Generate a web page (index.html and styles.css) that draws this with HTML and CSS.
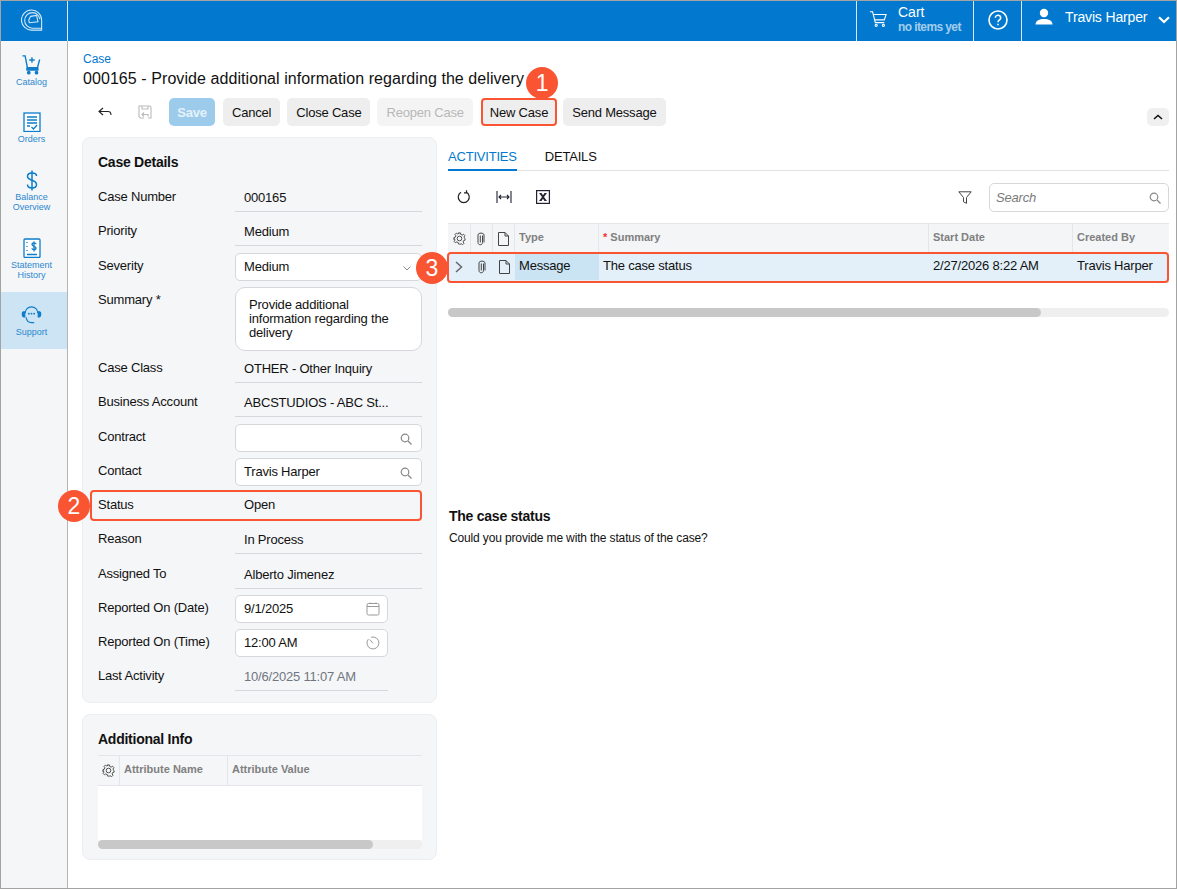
FILE: index.html
```html
<!DOCTYPE html>
<html lang="en">
<head>
  <meta charset="UTF-8" />
  <meta name="viewport" content="width=device-width, initial-scale=1" />
  <title>Case 000165</title>
  <link rel="stylesheet" href="styles.css">
</head>
<body>
  <div class="app">
    <header class="topbar">
      <div class="logo-cell">
        <svg width="22" height="22" viewBox="0 0 24 24" fill="none" stroke="#d5e9f7" stroke-width="1.2">
          <path d="M22.500 23H12A11 11 0 1 1 22.500 12Z"/>
          <path d="M22.500 21H12.500A8.500 8.500 0 1 1 12.500 4C17 4 20 7.500 20.500 11"/>
          <path d="M8.500 12 10.500 8 17 7 18.500 14 9 15Z"/>
        </svg>
      </div>
      <div class="topbar-space"></div>
      <div class="cart-cell">
        <svg width="18" height="18" viewBox="0 0 20 20" fill="none" stroke="#fff" stroke-width="1.2">
          <path d="M1 2h3l3 12h10M5 5h14l-2 6H6.500"/>
          <circle cx="8" cy="17" r="1.200"/><circle cx="16" cy="17" r="1.200"/>
        </svg>
        <div class="cart-text">
          <div class="cart-title">Cart</div>
          <div class="cart-sub">no items yet</div>
        </div>
      </div>
      <div class="help-cell">
        <svg width="20" height="20" viewBox="0 0 20 20" fill="none" stroke="#fff" stroke-width="1.600">
          <circle cx="10" cy="10" r="9"/>
          <path d="M7.300 7.800a2.700 2.500 0 1 1 4.300 2c-1 .8-1.600 1.200-1.600 2.400"/>
          <path d="M10 13.800v1.500"/>
        </svg>
      </div>
      <div class="user-cell">
        <svg class="user-ico" width="18" height="18" viewBox="0 0 18 18" fill="#fff">
          <circle cx="9" cy="5" r="4.200"/>
          <path d="M0.500 16.500c0-3.800 4-5.500 8.500-5.500s8.500 1.700 8.500 5.500Z"/>
        </svg>
        <span class="user-name">Travis Harper</span>
        <svg class="user-caret" width="12" height="8" viewBox="0 0 12 8" fill="none" stroke="#fff" stroke-width="2.200">
          <path d="M1 1.200 6 6l5-4.800"/>
        </svg>
      </div>
    </header>

    <div class="body-wrap">
      <nav class="sidenav">
        <a class="nav-item nav-catalog">
          <svg width="21" height="20" viewBox="0 0 22 22" fill="none" stroke="#0d7ccb" stroke-width="1.500">
            <path d="M1 1h3l2.500 13h11L20 5"/>
            <path d="M11.500 2.500v6M8.500 5.500h6"/>
            <path d="M6 14.500h12v2H6Z" fill="#0d7ccb"/>
            <circle cx="8" cy="19.500" r="1.300" fill="#0d7ccb"/><circle cx="16.500" cy="19.500" r="1.300" fill="#0d7ccb"/>
          </svg>
          <span>Catalog</span>
        </a>
        <a class="nav-item nav-orders">
          <svg width="18" height="20" viewBox="0 0 18 20" fill="#fff" stroke="#0d7ccb" stroke-width="1.300">
            <rect x="1" y="1" width="16" height="18.500"/>
            <path d="M4 5h10M4 8h10M4 11h10M4 14h3M8.500 15l2 2 3.500-4" fill="none"/>
          </svg>
          <span>Orders</span>
        </a>
        <a class="nav-item nav-balance">
          <svg width="12" height="21" viewBox="0 0 12 21" fill="none" stroke="#0d7ccb" stroke-width="1.500">
            <path d="M10.500 6C10.500 3.500 8.500 3 6 3S1.500 4 1.500 6.300c0 5 9 3 9 8.200C10.500 17 8.500 18 6 18s-4.500-1-4.500-3.500"/>
            <path d="M6 .5v20"/>
          </svg>
          <span>Balance<br>Overview</span>
        </a>
        <a class="nav-item nav-statement">
          <svg width="18" height="20" viewBox="0 0 18 20" fill="#fff" stroke="#0d7ccb" stroke-width="1.300">
            <rect x="1" y="1" width="16" height="18.500" rx="1"/>
            <path d="M4 4v1M4 8v1M4 12v1M4 16.500h10M13 6.300c0-1-1-1.500-2-1.500s-2 .5-2 1.800c0 2.200 4 1.200 4 3.400 0 1.200-1 1.700-2 1.700s-2-.5-2-1.500M11 3.500v10" fill="none"/>
          </svg>
          <span>Statement<br>History</span>
        </a>
        <a class="nav-item nav-support active">
          <svg width="21" height="18" viewBox="0 0 22 20" fill="none" stroke="#0d7ccb" stroke-width="1.300">
            <path d="M4 8C4 4 7 1 11 1s7 3 7 7"/>
            <path d="M3.500 6.500H2.200C1.200 6.500 .8 7.500 .8 9s.4 3 1.400 3h1.300Z" fill="#0d7ccb"/>
            <path d="M18.500 6.500h1.300c1 0 1.400 1 1.400 2.500s-.4 3-1.400 3h-1.300Z" fill="#0d7ccb"/>
            <path d="M5 12.500C5.500 16 8 18.500 11 18.500h3"/>
            <circle cx="8" cy="8.500" r="1" fill="#0d7ccb" stroke="none"/>
            <circle cx="11" cy="8.500" r="1" fill="#0d7ccb" stroke="none"/>
            <circle cx="14" cy="8.500" r="1" fill="#0d7ccb" stroke="none"/>
          </svg>
          <span>Support</span>
        </a>
      </nav>

      <main class="content">
        <a class="crumb">Case</a>
        <h1 class="page-title">000165 - Provide additional information regarding the delivery</h1>

        <div class="toolbar">
          <button class="icon-btn back-btn">
            <svg width="14" height="10" viewBox="0 0 14 10" fill="none" stroke="#222" stroke-width="1.100">
              <path d="M5 1 1 4.500 5 8M1 4.500h9c2 0 3 1 3 3.500"/>
            </svg>
          </button>
          <button class="icon-btn save-back-btn">
            <svg width="14" height="14" viewBox="0 0 14 14" fill="none" stroke="#bbb" stroke-width="1.100">
              <path d="M6 13H2.500L1 11.500V1h11l1 1.500V13h-3M4 1v3h6V1M6 7.500 4 9.500l2 2M4 9.500h6v2"/>
            </svg>
          </button>
          <button class="btn btn-save">Save</button>
          <button class="btn">Cancel</button>
          <button class="btn">Close Case</button>
          <button class="btn btn-off">Reopen Case</button>
          <button class="btn btn-new">New Case<span class="badge badge-1">1</span></button>
          <button class="btn">Send Message</button>
          <button class="collapse-btn">
            <svg width="10" height="6" viewBox="0 0 10 6" fill="none" stroke="#111" stroke-width="1.600">
              <path d="M1 5 5 1.500 9 5"/>
            </svg>
          </button>
        </div>

        <div class="columns">
          <div class="left-col">
            <section class="card card-details">
              <h2 class="card-title">Case Details</h2>
              <div class="form-row"><label>Case Number</label><div class="value">000165</div></div>
              <div class="form-row"><label>Priority</label><div class="value">Medium</div></div>
              <div class="form-row"><label>Severity</label>
                <div class="input">Medium
                  <svg class="select-caret" width="8" height="5" viewBox="0 0 8 5" fill="none" stroke="#888" stroke-width="1"><path d="M.5.500 4 4 7.500.500"/></svg>
                </div>
              </div>
              <div class="form-row row-tall"><label>Summary *</label>
                <div class="input textarea">Provide additional information regarding the delivery</div>
              </div>
              <div class="form-row"><label>Case Class</label><div class="value">OTHER - Other Inquiry</div></div>
              <div class="form-row"><label>Business Account</label><div class="value">ABCSTUDIOS - ABC St...</div></div>
              <div class="form-row"><label>Contract</label>
                <div class="input">
                  <svg class="search-ico" width="12" height="12" viewBox="0 0 12 12" fill="none" stroke="#888" stroke-width="1.200"><circle cx="5" cy="5" r="3.800"/><path d="M8 8l3.500 3.500"/></svg>
                </div>
              </div>
              <div class="form-row"><label>Contact</label>
                <div class="input">Travis Harper
                  <svg class="search-ico" width="12" height="12" viewBox="0 0 12 12" fill="none" stroke="#888" stroke-width="1.200"><circle cx="5" cy="5" r="3.800"/><path d="M8 8l3.500 3.500"/></svg>
                </div>
              </div>
              <div class="form-row row-status"><label>Status</label><div class="value value-plain">Open</div><span class="badge badge-2">2</span></div>
              <div class="form-row"><label>Reason</label><div class="value">In Process</div></div>
              <div class="form-row"><label>Assigned To</label><div class="value">Alberto Jimenez</div></div>
              <div class="form-row"><label>Reported On (Date)</label>
                <div class="input input-short">9/1/2025
                  <svg class="search-ico" width="14" height="14" viewBox="0 0 14 14" fill="none" stroke="#999" stroke-width="1"><rect x="1" y="1.500" width="12" height="11.500" rx="1.500"/><path d="M1 4.500h12M4 .5v1M10 .5v1"/></svg>
                </div>
              </div>
              <div class="form-row"><label>Reported On (Time)</label>
                <div class="input input-short">12:00 AM
                  <svg class="search-ico" width="14" height="14" viewBox="0 0 14 14" fill="none" stroke="#999" stroke-width="1"><path d="M5 1.300A6 6 0 1 1 2.300 3.200"/><path d="M3.800 3.500 7 7.300"/></svg>
                </div>
              </div>
              <div class="form-row"><label>Last Activity</label><div class="value value-short value-muted">10/6/2025 11:07 AM</div></div>
            </section>

            <section class="card card-info">
              <h2 class="card-title">Additional Info</h2>
              <div class="attr-head">
                <div class="attr-gear">
                  <svg width="13" height="13" viewBox="0 0 14 14" fill="none" stroke="#444" stroke-width="1"><circle cx="7" cy="7" r="2.500"/><path d="M6 1h2l.4 1.700 1.500.6 1.500-.9 1.400 1.400-.9 1.500.6 1.500L13 7.200v1.600l-1.500.4-.6 1.500.9 1.500-1.400 1.400-1.500-.9-1.500.6L7 13H6l-.4-1.700-1.500-.6-1.500.9-1.400-1.400.9-1.500-.6-1.500L1 8V6l1.500-.4.6-1.500-.9-1.500 1.400-1.400 1.500.9 1.500-.6Z"/></svg>
                </div>
                <div class="attr-name">Attribute Name</div>
                <div class="attr-value">Attribute Value</div>
              </div>
              <div class="attr-body"></div>
              <div class="scroll"><div class="scroll-thumb thumb-attr"></div></div>
            </section>
          </div>

          <div class="right-col">
            <div class="tabs">
              <a class="tab tab-on">ACTIVITIES</a>
              <a class="tab">DETAILS</a>
            </div>

            <div class="grid-tools">
              <svg class="tool tool-refresh" width="14" height="14" viewBox="0 0 14 14" fill="none" stroke="#222" stroke-width="1.200">
                <path d="M4 2.300A5.500 5.500 0 1 0 9.500 2.300"/><path d="M9.500 .3v2.500H7"/>
              </svg>
              <svg class="tool tool-fit" width="16" height="14" viewBox="0 0 16 14" fill="none" stroke="#223" stroke-width="1.100">
                <path d="M1 1v12M15 1v12M3 7h10M5 5 3 7l2 2M11 5l2 2-2 2"/>
              </svg>
              <svg class="tool tool-excel" width="14" height="14" viewBox="0 0 14 14" fill="none">
                <rect x=".6" y=".6" width="12.800" height="12.800" stroke="#223" stroke-width="1.200"/>
                <path d="M3 3h2.500l1.500 2.300L8.500 3H11L8 7l3 4H8.500L7 8.700 5.500 11H3l3-4Z" fill="#223"/>
              </svg>
              <div class="tools-space"></div>
              <svg class="tool-filter" width="14" height="13" viewBox="0 0 14 13" fill="none" stroke="#444" stroke-width="1">
                <path d="M.8.800h12.400L8.500 6.500v5.800l-3-1.500V6.500Z"/>
              </svg>
              <div class="search-box">Search
                <svg class="search-ico" width="12" height="12" viewBox="0 0 12 12" fill="none" stroke="#888" stroke-width="1.200"><circle cx="5" cy="5" r="3.800"/><path d="M8 8l3.500 3.500"/></svg>
              </div>
            </div>

            <div class="grid-row grid-head">
              <div class="cell cell-ico">
                <svg width="13" height="13" viewBox="0 0 14 14" fill="none" stroke="#444" stroke-width="1"><circle cx="7" cy="7" r="2.500"/><path d="M6 1h2l.4 1.700 1.500.6 1.500-.9 1.400 1.400-.9 1.500.6 1.500L13 7.200v1.600l-1.500.4-.6 1.500.9 1.500-1.400 1.400-1.500-.9-1.500.6L7 13H6l-.4-1.700-1.500-.6-1.500.9-1.400-1.400.9-1.500-.6-1.500L1 8V6l1.500-.4.6-1.500-.9-1.500 1.400-1.400 1.500.9 1.500-.6Z"/></svg>
              </div>
              <div class="cell cell-ico cell-clip">
                <svg width="9" height="14" viewBox="0 0 9 14" fill="none" stroke="#444" stroke-width="1"><path d="M6.500 3.500v7c0 3-4.500 3-4.500 0V3c0-2.500 6-2.500 6 0v7.500M4.300 3.500v7"/></svg>
              </div>
              <div class="cell cell-ico">
                <svg width="11" height="14" viewBox="0 0 11 14" fill="none" stroke="#444" stroke-width="1"><path d="M.5.500h6.500l3.500 3.500v9.500H.5ZM7 .5V4h3.500"/></svg>
              </div>
              <div class="cell">Type</div>
              <div class="cell"><span class="req">*</span> Summary</div>
              <div class="cell">Start Date</div>
              <div class="cell">Created By</div>
            </div>
            <div class="grid-row grid-data">
              <div class="cell cell-ico cell-expand">
                <svg class="row-expand" width="8" height="12" viewBox="0 0 8 12" fill="none" stroke="#666" stroke-width="1.500"><path d="M1 1l5.500 5L1 11"/></svg>
              </div>
              <div class="cell cell-ico cell-clip">
                <svg width="9" height="14" viewBox="0 0 9 14" fill="none" stroke="#444" stroke-width="1"><path d="M6.500 3.500v7c0 3-4.500 3-4.500 0V3c0-2.500 6-2.500 6 0v7.500M4.300 3.500v7"/></svg>
              </div>
              <div class="cell cell-ico">
                <svg width="11" height="14" viewBox="0 0 11 14" fill="none" stroke="#444" stroke-width="1"><path d="M.5.500h6.500l3.500 3.500v9.500H.5ZM7 .5V4h3.500"/></svg>
              </div>
              <div class="cell cell-type">Message</div>
              <div class="cell">The case status</div>
              <div class="cell">2/27/2026 8:22 AM</div>
              <div class="cell">Travis Harper</div>
              <span class="badge badge-3">3</span>
            </div>

            <div class="scroll scroll-grid"><div class="scroll-thumb thumb-grid"></div></div>

            <div class="message">
              <h3 class="message-title">The case status</h3>
              <p class="message-text">Could you provide me with the status of the case?</p>
            </div>
          </div>
        </div>
      </main>
    </div>
  </div>
</body>
</html>
```

FILE: styles.css
```css
* {
  box-sizing: border-box;
}
body {
  margin: 0;
  font-family: "Liberation Sans", Arial, sans-serif;
  font-size: 13px;
  letter-spacing: -0.2px;
  color: #111;
  background: #fff;
}
.app {
  width: 1177px;
  height: 889px;
  border: 1px solid #a3a3a3;
  display: flex;
  flex-direction: column;
  overflow: hidden;
}

/* top bar */
.topbar {
  height: 40px;
  background-color: #0279cf;
  color: white;
  display: flex;
  flex: none;
}
.logo-cell {
  width: 67px;
  border-right: 1px solid #d8e9f6;
  display: flex;
  align-items: center;
  justify-content: center;
  padding: 0 5px 2px 0;
}
.topbar-space {
  flex-grow: 1;
}
.cart-cell {
  width: 117px;
  border-left: 1px solid #d8e9f6;
  display: flex;
  align-items: flex-start;
  padding: 9px 0 0 12px;
  gap: 11px;
}
.cart-title {
  font-size: 14px;
  letter-spacing: 0;
  line-height: 14px;
  margin-top: -5px;
}
.cart-sub {
  font-size: 12px;
  font-weight: bold;
  color: #a3cdec;
  line-height: 14px;
  margin-top: 1px;
  letter-spacing: -0.6px;
}
.help-cell {
  width: 48px;
  border-left: 1px solid #d8e9f6;
  display: flex;
  align-items: center;
  justify-content: center;
  padding-bottom: 2px;
}
.user-cell {
  width: 155px;
  border-left: 1px solid #d8e9f6;
  display: flex;
  align-items: center;
  padding-left: 13px;
}
.user-ico {
  margin-top: -8px;
}
.user-name {
  font-size: 14px;
  letter-spacing: -0.15px;
  margin-left: 12px;
  margin-top: -8px;
}
.user-caret {
  margin-left: 11px;
  margin-top: -2px;
}

/* side nav */
.body-wrap {
  display: flex;
  flex-grow: 1;
  min-height: 0;
}
.sidenav {
  width: 67px;
  flex: none;
  background-color: #f5f6f8;
  border-right: 1px solid #b5b5b5;
}
.nav-item {
  display: flex;
  flex-direction: column;
  align-items: center;
  font-size: 9px;
  letter-spacing: 0;
  line-height: 10px;
  color: #2b88cf;
  text-align: center;
  padding-right: 5px;
}
.nav-item span {
  display: block;
  margin-top: 2px;
}
.nav-catalog {
  height: 58px;
  padding-top: 14px;
}
.nav-orders {
  height: 58px;
  padding-top: 13px;
}
.nav-balance {
  height: 68px;
  padding-top: 13px;
}
.nav-balance span {
  margin-top: 1px;
}
.nav-statement {
  height: 67px;
  padding-top: 13px;
}
.nav-support {
  height: 57px;
  padding-top: 14px;
}
.nav-support span {
  margin-top: 3px;
}
.nav-item.active {
  background-color: #cce4f4;
}

/* main content */
.content {
  flex-grow: 1;
  min-width: 0;
  padding: 11px 7px 0 14px;
}
.crumb {
  display: block;
  font-size: 12px;
  letter-spacing: 0;
  line-height: 14px;
  color: #0279cf;
  margin-left: 1px;
}
.page-title {
  margin: 3px 0 0 1px;
  font-size: 16px;
  letter-spacing: 0.07px;
  font-weight: normal;
  line-height: 20px;
}
.toolbar {
  display: flex;
  align-items: center;
  gap: 7px;
  height: 28px;
  margin-top: 9px;
  position: relative;
}
.icon-btn {
  width: 36px;
  height: 28px;
  background: none;
  border: none;
  padding: 0;
  display: flex;
  align-items: center;
  justify-content: center;
}
.back-btn {
  margin-left: 5px;
}
.save-back-btn {
  margin-left: -3px;
  margin-right: -1px;
}
.btn {
  font-family: inherit;
  font-size: 13px;
  letter-spacing: -0.2px;
  height: 28px;
  padding: 0 9px;
  border: none;
  border-radius: 5px;
  background-color: #eeeeee;
  color: #111;
  white-space: nowrap;
}
.btn-save {
  background-color: #9dcbec;
  color: #e6f2fa;
  font-weight: bold;
  width: 46px;
  padding: 0;
  margin-right: 1px;
}
.btn-off {
  background-color: #f4f4f4;
  color: #b8b8b8;
  margin-right: 1px;
}
.btn-new {
  position: relative;
  border: 2px solid #fa5533;
  border-radius: 4px;
  padding: 0 7px;
  margin-right: -1px;
}
.collapse-btn {
  width: 22px;
  height: 18px;
  margin-left: auto;
  margin-top: 10px;
  background-color: #f0f0f0;
  border: none;
  border-radius: 5px;
  padding: 0;
  display: flex;
  align-items: center;
  justify-content: center;
}

/* numbered markers */
.badge {
  position: absolute;
  width: 32px;
  height: 32px;
  border-radius: 50%;
  background-color: #fa5533;
  color: white;
  font-size: 23px;
  letter-spacing: 0;
  line-height: 32px;
  font-weight: normal;
  text-align: center;
}
.badge-1 {
  right: -3px;
  top: -33px;
}
.badge-2 {
  left: -40px;
  top: -2px;
}
.badge-3 {
  left: -32px;
  top: -1px;
  z-index: 1;
}

/* left column */
.columns {
  display: flex;
  gap: 11px;
  margin-top: 11px;
}
.left-col {
  width: 355px;
  flex: none;
}
.card {
  background-color: #f5f6f8;
  border: 1px solid #eceef1;
  border-radius: 8px;
  padding: 0 14px 0 15px;
}
.card-details {
  height: 566px;
}
.card-info {
  height: 146px;
  margin-top: 11px;
}
.card-title {
  margin: 0;
  font-size: 14px;
  letter-spacing: -0.25px;
  font-weight: bold;
  line-height: 16px;
  padding-top: 16px;
}
.card-details .card-title {
  height: 46px;
}
.card-info .card-title {
  height: 40px;
}
.form-row {
  display: flex;
  height: 28px;
  margin-bottom: 6.25px;
  position: relative;
}
.form-row label {
  width: 137px;
  flex: none;
  line-height: 26px;
}
.value {
  width: 187px;
  padding-left: 9px;
  border-bottom: 1px solid #d5d7da;
  line-height: 27px;
  white-space: nowrap;
}
.value-plain {
  border-bottom: none;
  line-height: 26px;
}
.value-short {
  width: 153px;
}
.value-muted {
  color: #6f7680;
}
.input {
  width: 187px;
  height: 28px;
  padding-left: 8px;
  background-color: #fff;
  border: 1px solid #d5d7da;
  border-radius: 5px;
  line-height: 25px;
  position: relative;
}
.input-short {
  width: 153px;
}
.textarea {
  height: 64px;
  flex: none;
  padding: 10px 13px;
  line-height: 14px;
  border-radius: 10px;
}
.row-tall {
  height: 62px;
}
.select-caret {
  position: absolute;
  right: 10px;
  top: 12px;
}
.search-ico {
  position: absolute;
  right: 9px;
  top: 8px;
}
.input-short .search-ico {
  top: 6px;
  right: 7px;
}
.row-status::after {
  content: "";
  position: absolute;
  left: -8px;
  right: 0;
  top: -2px;
  bottom: -1px;
  border: 2px solid #fa5533;
  border-radius: 4px;
}

/* attribute table */
.attr-head {
  display: flex;
  height: 31px;
  border-top: 1px solid #e4e6e9;
  border-bottom: 1px solid #e4e6e9;
  font-size: 11px;
  letter-spacing: 0;
  font-weight: bold;
  color: #808080;
  line-height: 26px;
}
.attr-gear {
  width: 22px;
  border-right: 1px solid #e4e6e9;
  display: flex;
  align-items: center;
  justify-content: center;
}
.attr-name {
  width: 108px;
  padding-left: 4px;
  border-right: 1px solid #e4e6e9;
}
.attr-value {
  padding-left: 4px;
}
.attr-body {
  height: 54px;
  background-color: #fff;
}
.scroll {
  height: 9px;
  border-radius: 5px;
  background-color: #efefef;
}
.scroll-thumb {
  height: 9px;
  border-radius: 5px;
  background-color: #c8c8c8;
}
.thumb-attr {
  width: 275px;
}
.thumb-grid {
  width: 593px;
}
.scroll-grid {
  margin-top: 25px;
}

/* right column */
.right-col {
  flex-grow: 1;
  min-width: 0;
}
.tabs {
  display: flex;
  gap: 28px;
  height: 34px;
  border-bottom: 1px solid #e2e2e2;
  padding-top: 12px;
  line-height: 16px;
}
.tab {
  height: 22px;
}
.tab-on {
  color: #0279cf;
  border-bottom: 2px solid #0279cf;
}
.grid-tools {
  display: flex;
  align-items: center;
  height: 30px;
  margin-top: 11px;
  margin-bottom: 11px;
}
.tool-refresh {
  margin-left: 9px;
}
.tool-fit {
  margin-left: 25px;
}
.tool-excel {
  margin-left: 24px;
}
.tools-space {
  flex-grow: 1;
}
.tool-filter {
  margin-right: 17px;
}
.search-box {
  width: 180px;
  height: 29px;
  padding-left: 6px;
  border: 1px solid #d5d7da;
  border-radius: 5px;
  background-color: #fff;
  color: #7a7a7a;
  font-style: italic;
  line-height: 27px;
  position: relative;
}
.search-box .search-ico {
  right: 7px;
}
.grid-row {
  display: grid;
  grid-template-columns: 23px 22px 22px 84px 330px 144px 96px;
  position: relative;
}
.grid-head {
  height: 30px;
  background-color: #f4f5f7;
  border-top: 1px solid #e4e6e9;
  font-size: 11px;
  letter-spacing: 0;
  font-weight: bold;
  color: #808080;
  line-height: 26px;
}
.grid-head .cell {
  border-right: 1px solid #e4e6e9;
  padding-left: 4px;
}
.grid-head .cell:last-child {
  border-right: none;
}
.grid-head .cell-ico {
  padding-left: 0;
}
.cell-ico {
  display: flex;
  align-items: center;
  justify-content: center;
}
.grid-row .cell-clip {
  padding-right: 2px;
}
.grid-row .cell-expand {
  padding-right: 2px;
}
.req {
  color: #e33;
}
.grid-data {
  height: 30px;
  background-color: #e3f0f9;
  line-height: 24px;
}
.grid-data .cell {
  padding-left: 4px;
  height: 26px;
  margin-top: 1px;
  white-space: nowrap;
}
.grid-data .cell-ico {
  padding-left: 0;
}
.grid-data .cell-type {
  background-color: #cbe4f4;
}
.grid-data::after {
  content: "";
  position: absolute;
  left: -1px;
  right: 0;
  top: -1px;
  bottom: 0;
  border: 2px solid #fa5533;
  border-radius: 4px;
}
.message {
  margin-top: 191px;
}
.message-title {
  margin: 0 0 0 1px;
  font-size: 14px;
  letter-spacing: -0.25px;
  line-height: 16px;
}
.message-text {
  margin: 7px 0 0 1px;
  font-size: 12px;
  letter-spacing: -0.14px;
  line-height: 14px;
}
```
